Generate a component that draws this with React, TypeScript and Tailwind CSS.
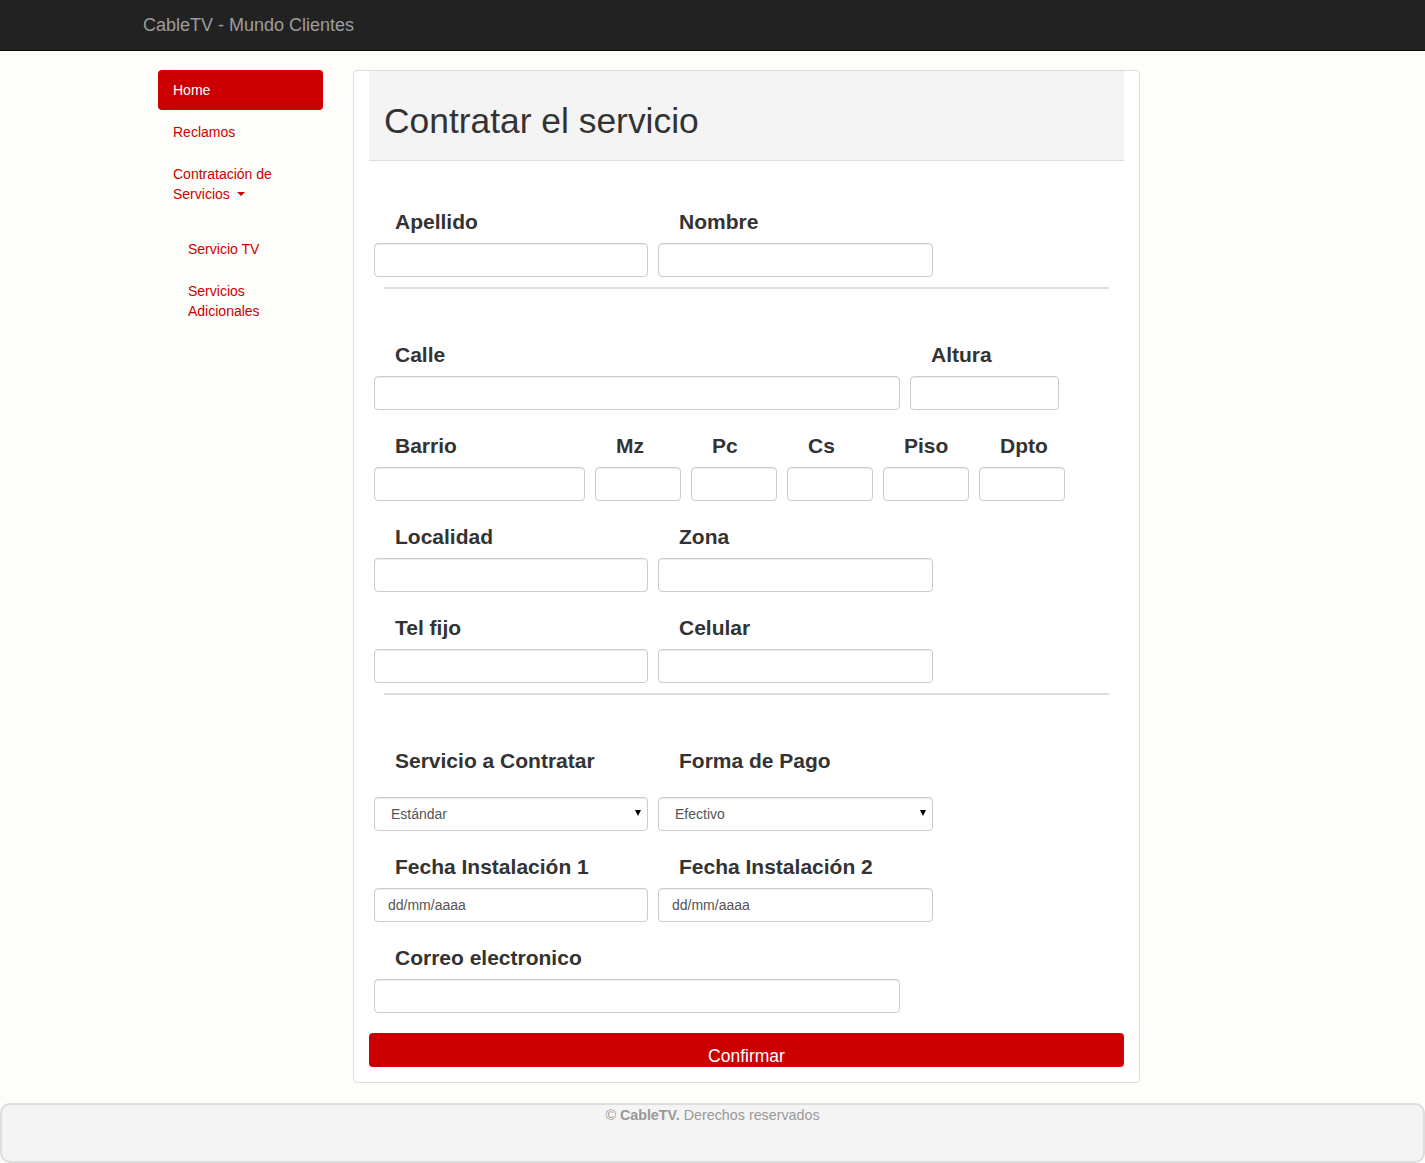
import { ReactNode } from "react";

const inputCls =
  "h-[34px] rounded-[4px] border border-[#ccc] bg-white shadow-[inset_0_1px_1px_rgba(0,0,0,0.075)] px-[12px] text-[14px] text-[#555] outline-none";

function Field({
  label,
  width,
  children,
  labelGap = "mb-[10px]",
}: {
  label: string;
  width: string;
  children?: ReactNode;
  labelGap?: string;
}) {
  return (
    <div className={`flex flex-col ${width}`}>
      <label
        className={`pl-[21px] text-[21px] font-bold leading-[22px] text-[#333] whitespace-nowrap ${labelGap}`}
      >
        {label}
      </label>
      {children ?? <input type="text" className={`${inputCls} w-full`} />}
    </div>
  );
}

function Select({ value, width }: { value: string; width: string }) {
  return (
    <div className={`relative ${width}`}>
      <div
        className={`${inputCls} w-full flex items-center pl-[16px] text-[14px] text-[#555]`}
      >
        {value}
      </div>
      <span className="absolute right-[7px] top-[13px] w-0 h-0 border-l-[3.5px] border-r-[3.5px] border-t-[6px] border-l-transparent border-r-transparent border-t-black" />
    </div>
  );
}

function DateInput({ width }: { width: string }) {
  return (
    <input
      type="text"
      placeholder="dd/mm/aaaa"
      className={`${inputCls} ${width} pl-[13px] text-[13px] placeholder:text-[#555]`}
    />
  );
}

function Divider() {
  return <div className="mx-[10px] h-[2px] bg-[#ddd]" />;
}

function Sidebar() {
  const item =
    "block px-[15px] py-[10px] rounded-[4px] text-[14px] leading-[20px] text-[#cc0000]";
  return (
    <ul className="w-[165px] shrink-0 flex flex-col gap-[2px]">
      <li>
        <a className={`${item} bg-[#cc0000] !text-white`}>Home</a>
      </li>
      <li>
        <a className={item}>Reclamos</a>
      </li>
      <li>
        <a className={item}>
          Contratación de
          <br />
          Servicios
          <span className="inline-block ml-[7px] mb-[3px] w-0 h-0 border-l-[4px] border-r-[4px] border-t-[4px] border-l-transparent border-r-transparent border-t-[#cc0000] align-middle" />
        </a>
        <ul className="mt-[15px] pl-[15px] flex flex-col gap-[2px]">
          <li>
            <a className={item}>Servicio TV</a>
          </li>
          <li>
            <a className={item}>
              Servicios
              <br />
              Adicionales
            </a>
          </li>
        </ul>
      </li>
    </ul>
  );
}

export default function App() {
  return (
    <div className="min-h-[1163px] bg-[#fdfdf9] font-['Liberation_Sans',Arial,sans-serif] flex flex-col">
      <nav className="h-[51px] bg-[#222] border-b border-[#080808]">
        <div className="w-[1171px] mx-auto px-[16px] h-[50px] flex items-center">
          <span className="text-[18px] text-[#9d9d9d]">
            CableTV - Mundo Clientes
          </span>
        </div>
      </nav>

      <div className="w-[1171px] mx-auto pl-[31px] pt-[19px] flex gap-[30px]">
        <Sidebar />

        <div className="w-[787px] rounded-[4px] border border-[#ddd] bg-white px-[15px] pb-[15px]">
          <div className="h-[90px] bg-[#f4f4f4] border-b border-[#ddd] flex items-end pb-[19px] px-[15px]">
            <h1 className="text-[35.4px] leading-[40px] text-[#333]">
              Contratar el servicio
            </h1>
          </div>

          <div className="px-[5px]">
            <div className="flex gap-[10px] pt-[50px]">
              <Field label="Apellido" width="w-[274px]" />
              <Field label="Nombre" width="w-[275px]" />
            </div>
            <div className="mt-[10px]">
              <Divider />
            </div>

            <div className="flex gap-[10px] mt-[55px]">
              <Field label="Calle" width="w-[526px]" />
              <Field label="Altura" width="w-[149px]" />
            </div>

            <div className="flex gap-[10px] mt-[25px]">
              <Field label="Barrio" width="w-[211px]" />
              <Field label="Mz" width="w-[86px]" />
              <Field label="Pc" width="w-[86px]" />
              <Field label="Cs" width="w-[86px]" />
              <Field label="Piso" width="w-[86px]" />
              <Field label="Dpto" width="w-[86px]" />
            </div>

            <div className="flex gap-[10px] mt-[25px]">
              <Field label="Localidad" width="w-[274px]" />
              <Field label="Zona" width="w-[275px]" />
            </div>

            <div className="flex gap-[10px] mt-[25px]">
              <Field label="Tel fijo" width="w-[274px]" />
              <Field label="Celular" width="w-[275px]" />
            </div>
            <div className="mt-[10px]">
              <Divider />
            </div>

            <div className="flex gap-[10px] mt-[55px]">
              <Field
                label="Servicio a Contratar"
                width="w-[274px]"
                labelGap="mb-[25px]"
              >
                <Select value="Estándar" width="w-full" />
              </Field>
              <Field
                label="Forma de Pago"
                width="w-[275px]"
                labelGap="mb-[25px]"
              >
                <Select value="Efectivo" width="w-full" />
              </Field>
            </div>

            <div className="flex gap-[10px] mt-[25px]">
              <Field label="Fecha Instalación 1" width="w-[274px]">
                <DateInput width="w-full" />
              </Field>
              <Field label="Fecha Instalación 2" width="w-[275px]">
                <DateInput width="w-full" />
              </Field>
            </div>

            <div className="flex gap-[10px] mt-[25px]">
              <Field label="Correo electronico" width="w-[526px]" />
            </div>
          </div>

          <button className="mt-[20px] w-full h-[34px] rounded-[4px] bg-[#cc0000] text-white text-[17.5px] leading-[20px] pt-[13px] flex justify-center items-start">
            Confirmar
          </button>
        </div>
      </div>

      <footer className="mt-[20px] h-[60px] rounded-[10px] border-2 border-[#ddd] bg-[#f4f4f4] text-center text-[14.3px] leading-[20px] text-[#999]">
        © <b>CableTV.</b> Derechos reservados
      </footer>
    </div>
  );
}
